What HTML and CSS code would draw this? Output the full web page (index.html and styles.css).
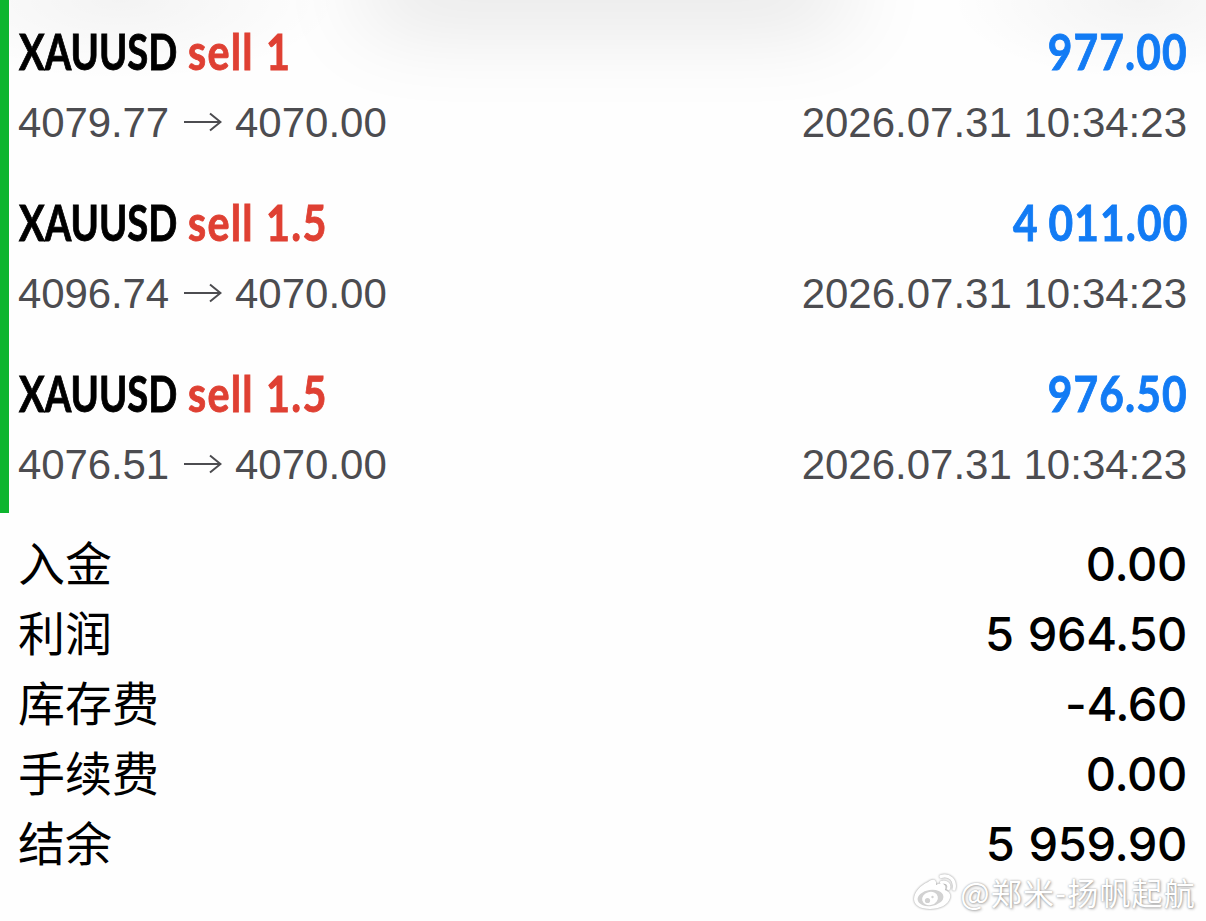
FILE: index.html
```html
<!DOCTYPE html>
<html lang="zh-CN">

<head>
    <meta charset="UTF-8">
    <meta name="viewport" content="width=device-width, initial-scale=1.0">
    <title>XAUUSD</title>
    <link rel="stylesheet" href="styles.css">
</head>

<body>
    <!-- Closed deals -->
    <div class="deals">
        <div class="deal">
            <div class="row head">
                <div class="name"><b class="symbol">XAUUSD</b><b class="side">sell 1</b></div>
                <b class="profit">977.00</b>
            </div>
            <div class="row info">
                <div class="prices">
                    <span class="open">4079.77</span>
                    <svg class="arrow" viewBox="0 0 38 20"><path d="M0 10H36M26 1.5L36.5 10L26 18.5" /></svg>
                    <span>4070.00</span>
                </div>
                <span class="time">2026.07.31 10:34:23</span>
            </div>
        </div>
        <div class="deal">
            <div class="row head">
                <div class="name"><b class="symbol">XAUUSD</b><b class="side">sell 1.5</b></div>
                <b class="profit">4 011.00</b>
            </div>
            <div class="row info">
                <div class="prices">
                    <span class="open">4096.74</span>
                    <svg class="arrow" viewBox="0 0 38 20"><path d="M0 10H36M26 1.5L36.5 10L26 18.5" /></svg>
                    <span>4070.00</span>
                </div>
                <span class="time">2026.07.31 10:34:23</span>
            </div>
        </div>
        <div class="deal">
            <div class="row head">
                <div class="name"><b class="symbol">XAUUSD</b><b class="side">sell 1.5</b></div>
                <b class="profit">976.50</b>
            </div>
            <div class="row info">
                <div class="prices">
                    <span class="open">4076.51</span>
                    <svg class="arrow" viewBox="0 0 38 20"><path d="M0 10H36M26 1.5L36.5 10L26 18.5" /></svg>
                    <span>4070.00</span>
                </div>
                <span class="time">2026.07.31 10:34:23</span>
            </div>
        </div>
    </div>

    <!-- Account totals -->
    <div class="totals">
        <div class="row total"><span>入金</span><span class="sum">0.00</span></div>
        <div class="row total"><span>利润</span><span class="sum">5 964.50</span></div>
        <div class="row total"><span>库存费</span><span class="sum">-4.60</span></div>
        <div class="row total"><span>手续费</span><span class="sum">0.00</span></div>
        <div class="row total"><span>结余</span><span class="sum">5 959.90</span></div>
    </div>

    <!-- Watermark -->
    <div class="watermark">
        <svg class="weibo" viewBox="0 0 46 38">
            <path class="fill" d="M16 9C21 5 25 7 24 12C30 9 35 11 33 17C38 19 39 22 38 25C36 32 28 36 18 36C8 36 2 32 2 26C2 19 9 12 16 9Z" />
            <ellipse class="eye" cx="18.500" cy="25" rx="13" ry="8" transform="rotate(-8 18.500 25)" />
            <ellipse class="fill" cx="18" cy="25.500" rx="8" ry="6.500" transform="rotate(-15 18 25.500)" />
            <circle class="eye" cx="15.500" cy="27.500" r="2.600" />
            <circle class="eye" cx="20.500" cy="24" r="1.200" />
            <path class="wave" d="M29 3.500C37 1 44 7 42 16M29.500 9.500C34 8 38 11 36.500 15.500" />
        </svg>
        <span class="author">@郑米-扬帆起航</span>
    </div>
</body>

</html>
```

FILE: styles.css
```css
body {
    margin: 0;
    height: 921px;
    overflow: hidden;
    position: relative;
    color: #000;
    background-color: #fefefe;
    background-image:
        radial-gradient(ellipse 190px 80px at 1140px 0, rgba(0, 0, 0, 0.045), transparent),
        radial-gradient(ellipse 220px 80px at 120px 0, rgba(0, 0, 0, 0.045), transparent);
    font-family: "Liberation Sans", Arial, sans-serif;
}

/* soft shadow of the bar above the list */
body::before {
    content: "";
    position: absolute;
    top: -40px;
    left: 370px;
    width: 470px;
    height: 40px;
    border-radius: 20px;
    box-shadow: 0 10px 90px 10px rgba(0, 0, 0, 0.13);
    z-index: -1;
}

.row {
    display: flex;
    justify-content: space-between;
    align-items: center;
    white-space: nowrap;
}

.deals {
    box-sizing: border-box;
    height: 513px;
    padding: 16px 19px 0 10px;
    border-left: 9px solid #0db52f;
}

.deal {
    height: 171px;
}

.head {
    height: 70px;
    font-family: Lato, sans-serif;
    font-size: 50px;
    -webkit-text-stroke: 0.9px currentColor;
}

.name {
    display: flex;
}

/* condensed bold lettering */
.symbol {
    width: 169px;
    transform: scaleX(0.765);
    transform-origin: left;
}

.side {
    color: #df4033;
    letter-spacing: 1.6px;
    word-spacing: 1px;
    transform: scaleX(0.825);
    transform-origin: left;
}

.profit {
    margin-right: -1px;
    color: #127bf4;
    letter-spacing: 1.3px;
    word-spacing: -2px;
    transform: scaleX(0.85);
    transform-origin: right;
}

.info {
    height: 74px;
    font-size: 42px;
    color: #4c4c50;
}

.prices {
    display: flex;
    align-items: center;
    margin-left: -1px;
}

.open {
    width: 166px;
    letter-spacing: -0.1px;
}

.arrow {
    width: 38px;
    height: 20px;
    margin-right: 13px;
    margin-bottom: 2px;
    fill: none;
    stroke: #4c4c50;
    stroke-width: 2;
}

.totals {
    padding: 13px 19px 0 18px;
}

.total {
    height: 70px;
    font-family: "Noto Sans CJK SC", sans-serif;
    font-size: 47px;
    line-height: 70px;
}

.sum {
    padding-top: 5px;
    font-family: Inter, sans-serif;
    font-weight: 500;
    letter-spacing: -0.4px;
    word-spacing: 2px;
}

.watermark {
    position: absolute;
    right: 10px;
    bottom: 9px;
    display: flex;
    align-items: center;
    height: 40px;
    color: #fff;
}

.weibo {
    width: 46px;
    height: 38px;
    margin-right: 2px;
    filter: drop-shadow(0 0 1px rgba(0, 0, 0, 0.45));
}

.fill {
    fill: #fff;
}

.eye {
    fill: #d2d2d2;
}

.wave {
    fill: none;
    stroke: #fff;
    stroke-width: 3.2;
    stroke-linecap: round;
}

.author {
    font-family: "Noto Sans CJK SC", sans-serif;
    font-size: 31px;
    line-height: 40px;
    letter-spacing: 1.2px;
    text-shadow: 0 0 2px rgba(0, 0, 0, 0.35), 1px 1px 3px rgba(0, 0, 0, 0.3);
}
```
